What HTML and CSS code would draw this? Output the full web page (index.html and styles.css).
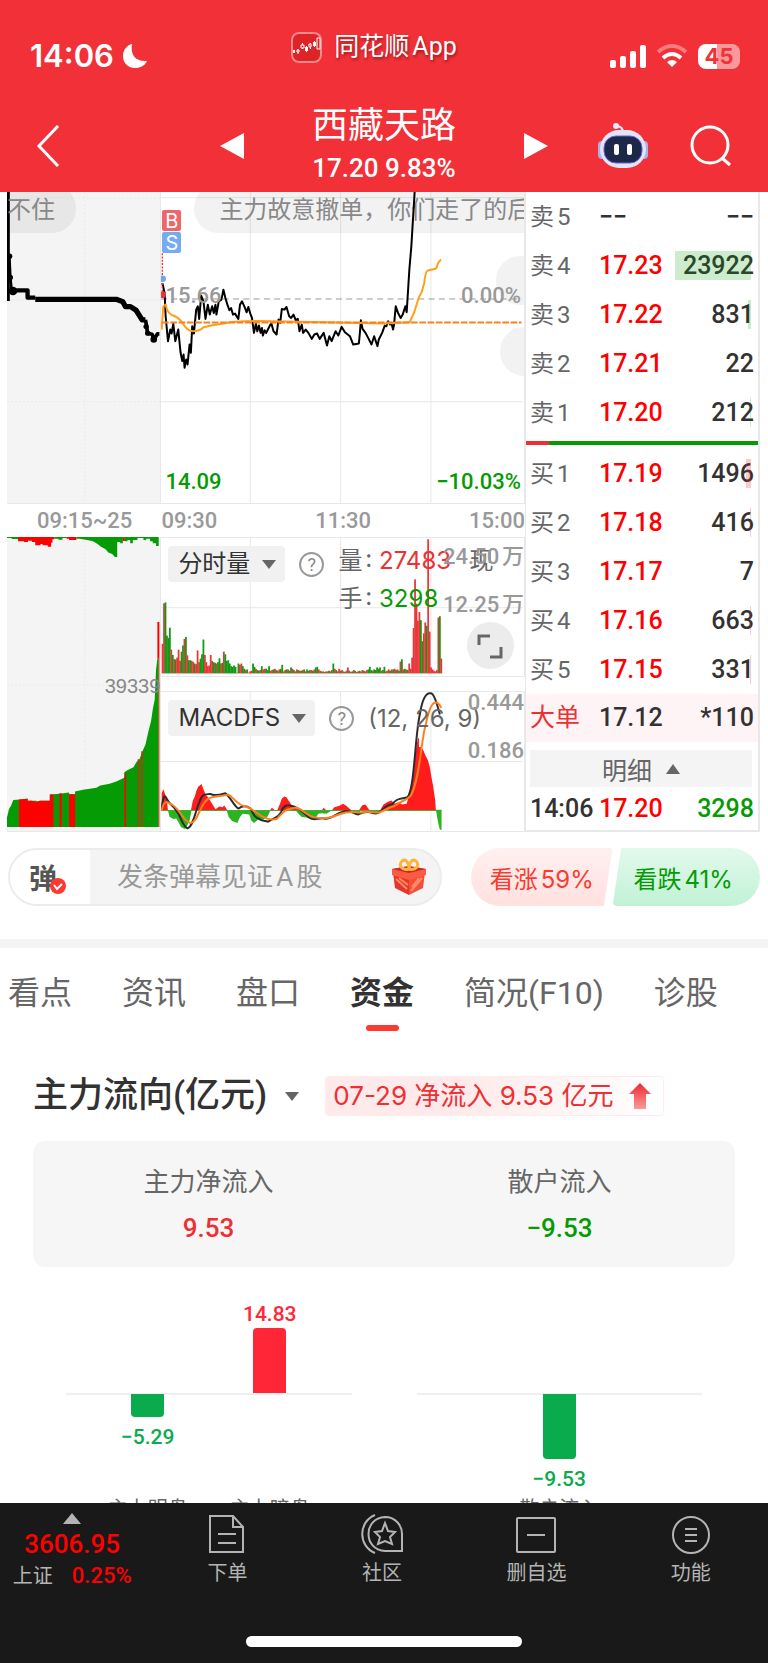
FILE: index.html
```html
<!DOCTYPE html>
<html lang="zh-CN">
<head>
    <meta charset="UTF-8">
    <meta name="viewport" content="width=device-width, initial-scale=1.0">
    <title>西藏天路</title>
    <link rel="stylesheet" href="styles.css">
</head>
<body>
    <div class="app">
        <header class="header">
            <div class="status-bar">
                <div class="clock">
                    <span>14:06</span>
                    <svg width="26" height="26" viewBox="0 0 26 26"><path d="M10 1C8 12 14 19 25 18C22 24 17 25 13 25C5 25 1 19 1 13C1 7 5 2 10 1Z" fill="#fff"/></svg>
                </div>
                <div class="app-name">
                    <svg width="31" height="31" viewBox="0 0 31 31">
                        <rect x="1" y="1" width="29" height="29" rx="7" fill="#df2427" stroke="#f8888b" stroke-width="2"/>
                        <path d="M7 17v5M11.500 11v6M15.500 14v6M19.500 11v6M23.500 9v6" stroke="#fff" stroke-width="1"/>
                        <path d="M2 18h2v3H2zM14 15h3v4h-3zM22 10h3v4h-3z" fill="#fff"/>
                        <path d="M6 18h2v2H6zM10 13h3v3h-3zM18 12h2v3h-2zM26 6h3v11h-3z" fill="#df2427" stroke="#fff"/>
                    </svg>
                    <span>同花顺App</span>
                </div>
                <div class="device">
                    <svg width="36" height="23" viewBox="0 0 36 23" fill="#fff">
                        <rect x="0" y="15" width="6" height="8" rx="2"/><rect x="10" y="11" width="6" height="12" rx="2"/><rect x="20" y="6" width="6" height="17" rx="2"/><rect x="30" y="0" width="6" height="23" rx="2"/>
                    </svg>
                    <svg width="32" height="24" viewBox="0 0 32 24" fill="none" stroke="#fff" stroke-width="4">
                        <path d="M2 8Q16 -4 30 8" stroke="#f77c80"/>
                        <path d="M7 14Q16 6 25 14"/>
                        <path d="M16 23l-5-5q5-4 10 0z" fill="#fff" stroke="none"/>
                    </svg>
                    <div class="battery">45</div>
                </div>
            </div>
            <div class="nav">
                <button class="icon-btn" aria-label="返回"><svg width="24" height="42" viewBox="0 0 24 42" fill="none" stroke="#fff" stroke-width="3"><path d="M22 1L3 21L22 41"/></svg></button>
                <div class="stock">
                    <button class="icon-btn" aria-label="上一只"><svg width="24" height="26" viewBox="0 0 24 26"><path d="M24 0v26L0 13z" fill="#fff"/></svg></button>
                    <div class="stock-title">
                        <h1>西藏天路</h1>
                        <p>17.20 9.83%</p>
                    </div>
                    <button class="icon-btn" aria-label="下一只"><svg width="24" height="26" viewBox="0 0 24 26"><path d="M0 0v26L24 13z" fill="#fff"/></svg></button>
                </div>
                <div class="nav-right">
                    <button class="icon-btn" aria-label="智能助手">
                        <svg width="50" height="46" viewBox="0 0 50 46">
                            <path d="M25 9Q25 4 19 3" fill="none" stroke="#e8eafc" stroke-width="2"/>
                            <circle cx="18" cy="3" r="3" fill="#e8eafc"/>
                            <rect x="0" y="18" width="8" height="18" rx="4" fill="#a9b2e8"/><rect x="42" y="18" width="8" height="18" rx="4" fill="#a9b2e8"/>
                            <rect x="2" y="7" width="46" height="38" rx="19" fill="#e3e4f8"/>
                            <rect x="6" y="13" width="38" height="27" rx="12" fill="#1d2748" stroke="#6b63e0"/>
                            <rect x="16" y="21" width="5" height="11" rx="2" fill="#fff"/><rect x="29" y="21" width="5" height="11" rx="2" fill="#fff"/>
                        </svg>
                    </button>
                    <button class="icon-btn" aria-label="搜索"><svg width="42" height="42" viewBox="0 0 42 42" fill="none" stroke="#fff" stroke-width="3"><circle cx="20" cy="20" r="18"/><path d="M32 33l8 7"/></svg></button>
                </div>
            </div>
        </header>

        <main class="content">
            <section class="market">
                <div class="charts">
                    <div class="panel auction-price">
                        <svg viewBox="21 6 462 936" preserveAspectRatio="none">
                            <g stroke="#e8e8e8" stroke-width="3" stroke-dasharray="5 7">
                                <path d="M21 24H483M21 637H483M255 6V942"/>
                            </g>
                            <path d="M21 331H483" stroke="#ececec" stroke-width="3"/>
                            <g fill="none" stroke="#000" stroke-linejoin="round">
                                <path d="M25 6V334" stroke-width="9"/>
                                <path d="M28 198L31 262L35 303" stroke-width="8"/>
                                <path d="M35 302H83V324H106" stroke-width="13"/>
                                <path d="M106 329H350L370 336L378 351H393L410 362L420 378L428 391H438" stroke-width="16"/>
                                <path d="M438 391L442 412L444 431L458 434L464 450L474 433H480" stroke-width="11"/>
                            </g>
                            <g fill="#000"><circle cx="29" cy="199" r="8"/><circle cx="31" cy="263" r="8"/><circle cx="39" cy="304" r="13"/><circle cx="440" cy="411" r="8"/><circle cx="463" cy="450" r="10"/><circle cx="445" cy="431" r="8"/></g>
                        </svg>
                        <span class="bullet bullet-left">不住</span>
                    </div>
                    <div class="panel price">
                        <svg viewBox="486 6 1092 936" preserveAspectRatio="none">
                            <path d="M486 23H1575M486 637H1575M755 6V942M1027 6V942M1299 6V942" stroke="#e8e8e8" stroke-width="3"/>
                        </svg>
                        <span class="bullet bullet-main">主力故意撤单，你们走了的后</span>
                        <span class="bullet bullet-small">⋮</span>
                        <span class="bullet bullet-dot"></span>
                        <svg class="lines" viewBox="486 6 1092 936" preserveAspectRatio="none" fill="none" stroke-linejoin="round">
                            <path d="M486 328H1572" stroke="#999" stroke-width="3" stroke-dasharray="18 13"/>
                            <path d="M490 280L497 310L500 380L507 455L514 420L518 432L523 402L529 455L538 420L545 490L550 515L554 495L557 535L562 510L566 525L572 465L576 490L580 410L585 432L592 360L597 350L601 388L607 318L614 335L620 388L627 345L633 375L640 350L645 370L650 345L653 375L660 335L668 330L674 300L680 325L686 345L692 362L697 355L703 375L709 372L719 388L724 345L730 335L737 350L744 368L749 352L755 372L760 385L766 430L772 402L776 425L781 408L786 430L790 415L793 438L798 422L803 430L808 420L818 400L825 425L834 435L840 390L845 400L850 358L858 360L864 352L872 380L878 385L885 375L892 392L898 388L903 425L910 405L914 430L922 420L930 430L940 448L948 435L956 432L964 448L976 430L986 468L993 440L1000 455L1012 425L1020 438L1030 412L1040 428L1055 440L1065 465L1082 462L1085 430L1088 392L1093 418L1102 430L1110 445L1120 465L1128 440L1138 470L1142 450L1152 430L1160 408L1165 410L1170 395L1176 405L1180 400L1185 420L1188 405L1193 350L1200 370L1208 385L1214 375L1222 350L1226 368L1234 240L1240 170L1250 6" stroke="#000" stroke-width="6"/>
                            <path d="M488 420L493 350L500 345Q505 370 518 376Q540 382 552 402Q568 430 590 424Q606 423 614 413Q645 405 675 402Q700 394 780 394L980 398L1160 402L1235 398L1248 370L1262 325L1272 305L1279 280Q1282 245 1290 242L1315 236Q1322 212 1330 210" stroke="#ff9f1a" stroke-width="6"/>
                            <path d="M489 399H1572" stroke="#ff7f1f" stroke-width="6" stroke-dasharray="20 5"/>
                            <path d="M490 190V315" stroke="#e8343a" stroke-width="4" stroke-dasharray="6 4"/>
                            <circle cx="491" cy="267" r="10" fill="#6da5ee"/>
                            <circle cx="491" cy="315" r="10" fill="#e8343a"/>
                        </svg>
                        <span class="mark mark-buy">B</span>
                        <span class="mark mark-sell">S</span>
                        <span class="label mid-price">15.66</span>
                        <span class="label mid-rate">0.00%</span>
                        <span class="label low-price">14.09</span>
                        <span class="label low-rate">−10.03%</span>
                    </div>
                    <div class="times times-auction">09:15~25</div>
                    <div class="times"><span>09:30</span><span>11:30</span><span>15:00</span></div>
                    <div class="panel auction-volume">
                        <svg viewBox="21 21 462 885" preserveAspectRatio="none">
                            <path d="M21 467H483M255 21V906" stroke="#e8e8e8" stroke-width="3" stroke-dasharray="5 7"/>
                            <path d="M21 21H54V27H35V24H21ZM163 21H200V24H188V29H176V26H163ZM230 21H478V48H470V40H460V34H452V26H440V30H432V24H414V30H400V40H392V30H384V34H376V24H370V40H362V36H353V81H346L338 72L326 68L318 58L304 50L294 42L280 34L262 30L240 26H230Z" fill="#049b04"/>
                            <path d="M54 21H163V28H158V38H154V50H144V46H128V42H122V46H106V36H96V32H84V36H72V34H54ZM200 21H230V30H208V26H200ZM370 24H376V33H370Z" fill="#f00"/>
                            <path d="M21 894V865L27 840L33 830L40 813L60 811L80 809H84V815H110V818L120 815H150V796L180 794L208 790V795H226V787L250 782L290 776L302 769L330 764L352 756L374 746V730L382 724L402 714L410 700L420 690L430 664L438 646L446 610L455 575L460 540L466 510L470 420L474 387H478V894Z" fill="#049b04"/>
                            <path d="M57 894V811L82 809V815H96L104 818H110L120 815H150V796H161V894ZM179 894V792H186V894ZM208 894V795H226V894ZM375 894V746L380 724V894ZM474 387V277H480V894H478V387Z" fill="#f00"/>
                            <path d="M417 894V690M428 894V666" stroke="#b43b10" stroke-width="5"/>
                        </svg>
                        <span class="label peak">39339</span>
                    </div>
                    <div class="indicators">
                        <div class="panel volume">
                            <svg viewBox="486 21 1092 420" preserveAspectRatio="none">
                                <path d="M486 233H1575M755 21V441M1027 21V441M1299 21V441" stroke="#e8e8e8" stroke-width="3"/>
                                <g id="volumeBars"></g>
                            </svg>
                            <div class="tools">
                                <button class="chip">分时量<i class="caret"></i></button>
                                <button class="help" aria-label="分时量说明">?</button>
                                <p class="reading"><span>量: <b class="up">27483</b></span><span>现</span><span>手: <b class="down">3298</b></span></p>
                            </div>
                            <div class="scale"><span>24.50万</span><span>12.25万</span></div>
                            <button class="expand" aria-label="全屏"><svg width="26" height="26" viewBox="0 0 26 26" fill="none" stroke="#666" stroke-width="3"><path d="M2 12V3H13M13 24H24V14"/></svg></button>
                        </div>
                        <div class="panel macd">
                            <svg viewBox="486 484 1092 420" preserveAspectRatio="none">
                                <path d="M486 694H1575M755 484V904M1027 484V904M1299 484V904" stroke="#e8e8e8" stroke-width="3"/>
                                <path d="M488 842V790L493 778L498 792L503 805L507 842ZM576 842L582 812L588 800L592 784L598 770L608 762L614 778L620 792L630 806L640 822L650 838L662 830L672 832L676 826L684 838V842ZM814 842L820 834L830 842H836L845 820L850 806L858 800L864 802L870 812L880 826L890 830L900 842H970L976 834L984 842H1000L1008 832L1024 828L1034 822L1044 828L1056 838L1060 842H1082L1092 826L1102 824L1112 838L1116 842H1146L1156 824L1168 816L1180 812L1190 822L1202 816L1212 824L1226 822L1232 800L1240 760L1248 720L1252 670L1260 624H1263V650H1270L1276 660L1282 674L1290 690L1296 712L1300 738L1306 770L1312 812L1314 842Z" fill="#ff1c1c"/>
                                <path d="M507 842L512 862L524 868L532 866L540 880L546 892L558 898L564 890L572 872L578 842ZM684 842L690 862L700 874L716 880L724 862L732 852L752 854L758 872L766 880L778 870L790 872L806 862L814 846V842ZM892 842L900 852L910 862L930 864L950 866L960 852L970 850L984 852L1000 842ZM1060 842L1070 850L1082 852L1088 842ZM1112 842L1124 850L1140 850L1146 842ZM1314 840L1318 864L1322 884L1326 900H1331V840Z" fill="#2cb321"/>
                                <path d="M486 842H1331" stroke="#4aa82f" stroke-width="3"/>
                                <g fill="none" stroke-width="6">
                                    <path d="M488 838C492 800 497 790 504 808C514 828 526 828 534 846C546 858 550 890 566 896C584 890 590 840 602 816C610 788 622 794 634 792C648 800 666 794 680 790C694 798 708 834 720 836C732 826 744 828 756 836C762 850 770 866 780 866C790 876 800 872 808 876C826 864 840 864 848 846C858 820 872 826 886 830C906 838 918 850 930 862C944 876 958 864 976 866C998 872 1012 850 1034 846C1052 836 1066 852 1080 854C1096 846 1108 844 1124 850C1150 858 1158 820 1182 824C1200 800 1214 808 1228 802C1250 780 1250 620 1266 550C1274 500 1286 488 1296 488C1306 484 1314 508 1326 552" stroke="#2c2c2c"/>
                                    <path d="M488 842C494 812 504 814 514 822C540 830 550 872 574 880C598 882 604 808 640 802C660 798 674 798 688 794C706 802 716 828 742 830C762 838 770 848 788 858C804 868 816 872 834 868C850 852 856 840 880 836C906 826 918 856 946 862C980 870 1004 862 1028 852C1052 842 1070 848 1090 848C1110 842 1128 850 1144 848C1160 842 1174 832 1194 826C1210 812 1226 812 1238 798C1266 750 1270 620 1284 580C1292 540 1302 518 1312 516C1320 514 1326 524 1330 532" stroke="#ff7f1f"/>
                                </g>
                            </svg>
                            <div class="tools">
                                <button class="chip">MACDFS<i class="caret"></i></button>
                                <button class="help" aria-label="MACDFS说明">?</button>
                                <p class="reading">(12, 26, 9)</p>
                            </div>
                            <div class="scale"><span>0.444</span><span>0.186</span></div>
                        </div>
                    </div>
                </div>

                <div class="book">
                    <table>
                        <tbody class="sell">
                            <tr><th>卖5</th><td class="flat">−−</td><td>−−</td></tr>
                            <tr><th>卖4</th><td>17.23</td><td><i class="depth" style="width:76px"></i>23922</td></tr>
                            <tr><th>卖3</th><td>17.22</td><td><i class="depth" style="width:3px"></i>831</td></tr>
                            <tr><th>卖2</th><td>17.21</td><td>22</td></tr>
                            <tr><th>卖1</th><td>17.20</td><td><i class="depth" style="width:1px"></i>212</td></tr>
                        </tbody>
                    </table>
                    <div class="ratio"></div>
                    <table>
                        <tbody class="buy">
                            <tr><th>买1</th><td>17.19</td><td><i class="depth" style="width:5px"></i>1496</td></tr>
                            <tr><th>买2</th><td>17.18</td><td><i class="depth" style="width:1px"></i>416</td></tr>
                            <tr><th>买3</th><td>17.17</td><td>7</td></tr>
                            <tr><th>买4</th><td>17.16</td><td><i class="depth" style="width:1px"></i>663</td></tr>
                            <tr><th>买5</th><td>17.15</td><td><i class="depth" style="width:1px"></i>331</td></tr>
                            <tr class="big-order"><th>大单</th><td>17.12</td><td>*110</td></tr>
                        </tbody>
                    </table>
                    <button class="detail">明细<i class="caret caret-up"></i></button>
                    <table class="trades">
                        <tbody>
                            <tr><td>14:06</td><td>17.20</td><td>3298</td></tr>
                        </tbody>
                    </table>
                </div>
            </section>

            <section class="interact">
                <div class="comment">
                    <button class="comment-toggle" aria-label="弹幕开关">弹<svg width="16" height="16" viewBox="0 0 16 16"><circle cx="8" cy="8" r="8" fill="#fb3a30"/><path d="M4 7l3 4l5-5" fill="none" stroke="#fff" stroke-width="2"/></svg></button>
                    <input type="text" aria-label="发弹幕" placeholder="发条弹幕见证A股">
                    <svg width="36" height="38" viewBox="0 0 36 38">
                        <path d="M2 14L18 19V37L4 30Z" fill="#e5352a"/><path d="M34 14L18 19V37L32 30Z" fill="#f0503a"/>
                        <path d="M1 11L18 8L35 11V17L18 22L1 17Z" fill="#fb5b43"/><path d="M1 11L18 15L35 11L18 8Z" fill="#c92a22"/>
                        <path d="M5 21L16 31M8 20L17 27M20 33L31 20M21 29L28 20" stroke="#ff8b62" stroke-width="2"/>
                        <path d="M18 11C11 13 7 7 11 3C15 0 18 5 18 11C18 5 21 0 25 3C29 7 25 13 18 11Z" fill="none" stroke="#ffb33e" stroke-width="3"/>
                    </svg>
                </div>
                <div class="vote">
                    <button class="vote-up">看涨59%</button>
                    <button class="vote-down">看跌41%</button>
                </div>
            </section>

            <nav class="tabs">
                <a href="#">看点</a>
                <a href="#">资讯</a>
                <a href="#">盘口</a>
                <a href="#" class="active">资金</a>
                <a href="#">简况(F10)</a>
                <a href="#">诊股</a>
            </nav>

            <section class="flow">
                <div class="flow-head">
                    <h2>主力流向(亿元)</h2>
                    <i class="caret"></i>
                    <p class="flow-tag">07-29 净流入 9.53 亿元
                        <svg width="22" height="26" viewBox="0 0 22 26"><defs><linearGradient id="arrow" x2="0" y2="1"><stop stop-color="#ee2a2f"/><stop offset="1" stop-color="#fa9a9c"/></linearGradient></defs><path d="M11 0L22 11H17V26H5V11H0Z" fill="url(#arrow)"/></svg>
                    </p>
                </div>
                <dl class="summary">
                    <div><dt>主力净流入</dt><dd class="up">9.53</dd></div>
                    <div><dt>散户流入</dt><dd class="down">−9.53</dd></div>
                </dl>
                <div class="bar-groups">
                    <div class="bar-group">
                        <div class="bar-item"><div class="above"></div><div class="below"><i style="height:23px"></i><span>−5.29</span></div><p>主力明盘</p></div>
                        <div class="bar-item"><div class="above"><span>14.83</span><i style="height:65px"></i></div><div class="below"></div><p>主力暗盘</p></div>
                    </div>
                    <div class="bar-group">
                        <div class="bar-item"><div class="above"></div><div class="below"><i style="height:65px"></i><span>−9.53</span></div><p>散户流入</p></div>
                    </div>
                </div>
            </section>
        </main>

        <footer class="toolbar">
            <div class="toolbar-row">
                <a href="#" class="index">
                    <i class="caret caret-up"></i>
                    <strong>3606.95</strong>
                    <span>上证 <b>0.25%</b></span>
                </a>
                <a href="#" class="tool">
                    <svg width="42" height="40" viewBox="0 0 42 40"><path d="M3 2H26L36 13V38H3ZM26 2V13H36M11 20H29M11 29H29"/></svg>
                    下单
                </a>
                <a href="#" class="tool">
                    <svg width="42" height="40" viewBox="0 0 42 40"><path d="M14 1C-3 8 -3 32 14 39M41 37H24C2 36 2 4 24 3C35 3 41 12 41 20ZM24 9L27 17L34 18L29 23L31 30L24 27L17 30L19 23L14 18L21 17Z"/></svg>
                    社区
                </a>
                <a href="#" class="tool">
                    <svg width="42" height="40" viewBox="0 0 42 40"><rect x="2" y="4" width="38" height="34" rx="1"/><path d="M12 21H30"/></svg>
                    删自选
                </a>
                <a href="#" class="tool">
                    <svg width="42" height="40" viewBox="0 0 42 40"><circle cx="21" cy="21" r="18"/><path d="M15 15H27M15 21H27M15 27H27"/></svg>
                    功能
                </a>
            </div>
            <div class="home-bar"></div>
        </footer>
    </div>

    <script src="chart.js"></script>
</body>
</html>
```

FILE: styles.css
```css
body {
    margin: 0;
    font-family: Roboto, "Noto Sans CJK SC", sans-serif;
    color: #323232;
    background-color: #fff;
    text-autospace: normal;
}

h1, h2, p, dl, dd {
    margin: 0;
}

button, input {
    margin: 0;
    padding: 0;
    border: none;
    background: none;
    font-family: inherit;
    color: inherit;
}

button {
    cursor: pointer;
}

a {
    color: inherit;
    text-decoration: none;
}

svg {
    display: block;
    flex-shrink: 0;
}

.app {
    display: flex;
    flex-direction: column;
    height: 100vh;
}

.up {
    color: #ee2f33;
}

.down {
    color: #049b04;
}

.caret {
    width: 0;
    height: 0;
    border: 7px solid transparent;
    border-top: 9px solid #666;
    border-bottom: none;
}

.caret-up {
    border-top: none;
    border-bottom: 10px solid #666;
}

/* header */
.header {
    background-color: #f23037;
    color: #fff;
    height: 192px;
}

.status-bar {
    display: grid;
    grid-template-columns: 1fr auto 1fr;
    align-items: center;
    height: 96px;
    padding: 8px 28px 0 30px;
    box-sizing: border-box;
}

.clock {
    display: flex;
    align-items: center;
    gap: 8px;
    font: 600 31px/40px Inter, sans-serif;
    padding-top: 8px;
}

.app-name {
    display: flex;
    align-items: center;
    gap: 12px;
    padding: 0 22px 10px 0;
    font-size: 25px;
    line-height: 32px;
    text-shadow: 1px 2px 3px rgba(0, 0, 0, 0.4);
}

.device {
    display: flex;
    align-items: center;
    justify-content: flex-end;
    gap: 10px;
    padding-top: 8px;
}

.battery {
    width: 42px;
    height: 25px;
    border-radius: 8px;
    background: linear-gradient(90deg, #fff 45%, #f9989b 45%);
    color: #f23037;
    font: 700 22px/25px Inter, sans-serif;
    text-align: center;
}

.nav {
    display: grid;
    grid-template-columns: 1fr auto 1fr;
    align-items: center;
    height: 96px;
    padding: 4px 36px 0;
    box-sizing: border-box;
}

.icon-btn {
    justify-self: start;
}

.stock {
    display: flex;
    align-items: center;
    gap: 66px;
}

.stock-title {
    text-align: center;
    width: 148px;
}

.stock-title h1 {
    font-size: 36px;
    font-weight: 400;
    line-height: 44px;
}

.stock-title p {
    font-size: 26px;
    font-weight: 500;
    line-height: 40px;
    white-space: nowrap;
}

.nav-right {
    display: flex;
    align-items: center;
    justify-content: flex-end;
    gap: 42px;
}

/* scroll area */
.content {
    flex: 1;
    min-height: 0;
    overflow-x: hidden;
    overflow-y: auto;
    scrollbar-width: none;
}

.market {
    display: flex;
    padding: 0 8px 0 7px;
}

.charts {
    flex: 520;
    min-width: 0;
    display: grid;
    grid-template-columns: 155fr 365fr;
    grid-template-rows: 312px 33px 295px;
}

.panel {
    position: relative;
    overflow: hidden;
    box-sizing: border-box;
    border: solid #e8e8e8;
    border-width: 0 1px 1px 0;
}

.panel > svg {
    width: 100%;
    height: 100%;
}

.panel .lines {
    position: absolute;
    top: 0;
    left: 0;
}

.auction-price, .auction-volume {
    background-color: #f4f4f4;
}

.bullet {
    position: absolute;
    box-sizing: border-box;
    height: 49px;
    border-radius: 24px;
    background-color: rgba(0, 0, 0, 0.05);
    color: #888;
    font-size: 24px;
    line-height: 36px;
    white-space: nowrap;
}

.bullet-left {
    top: -8px;
    left: -20px;
    width: 89px;
    padding: 8px 0 0 20px;
}

.bullet-main {
    top: -8px;
    left: 33px;
    padding: 8px 20px 0 25px;
}

.bullet-small {
    top: 64px;
    right: -28px;
    width: 56px;
    padding: 6px 0 0 22px;
}

.bullet-dot {
    top: 135px;
    right: -24px;
    width: 48px;
}

.mark {
    position: absolute;
    left: 1px;
    width: 19px;
    height: 21px;
    border-radius: 2px;
    color: #fff;
    font: 20px/22px Inter, sans-serif;
    text-align: center;
}

.mark-buy {
    top: 18px;
    background-color: #ee6669;
}

.mark-sell {
    top: 40px;
    background-color: #74abf2;
}

.label {
    position: absolute;
    font-size: 22px;
    font-weight: 500;
    line-height: 28px;
    color: #999;
}

.mid-price {
    top: 90px;
    left: 4px;
}

.mid-rate {
    top: 90px;
    right: 3px;
}

.low-price, .low-rate {
    bottom: 7px;
    color: #049b04;
}

.low-price {
    left: 4px;
}

.low-rate {
    right: 3px;
}

.times {
    display: flex;
    align-items: center;
    justify-content: space-between;
    font-size: 22px;
    font-weight: 500;
    color: #999;
}

.times-auction {
    justify-content: flex-end;
    padding-right: 29px;
}

.peak {
    right: 0;
    top: 135px;
    font: 20px/28px "Liberation Sans", sans-serif;
    color: #888;
}

.indicators {
    display: grid;
    grid-template-rows: 140px 141px;
    gap: 14px;
}

.indicators .panel {
    border-top-width: 1px;
}

.tools {
    position: absolute;
    top: 8px;
    left: 7px;
    display: flex;
    align-items: flex-start;
}

.chip {
    display: flex;
    align-items: center;
    gap: 12px;
    height: 36px;
    padding: 0 9px 0 10px;
    border-radius: 4px;
    background-color: #f1f1f1;
    font: 24px/36px Inter, "Noto Sans CJK SC", sans-serif;
    color: #323232;
}

.help {
    width: 25px;
    height: 25px;
    margin: 6px 14px 0;
    box-sizing: border-box;
    border: 2px solid #999;
    border-radius: 50%;
    color: #888;
    font-size: 18px;
    line-height: 20px;
}

.reading {
    display: grid;
    grid-template-columns: 131px auto;
    font: 24px/38px Inter, "Noto Sans CJK SC", sans-serif;
    color: #666;
    white-space: nowrap;
}

.volume .reading {
    margin-top: -4px;
}

.reading b {
    font-weight: 400;
}

.scale {
    position: absolute;
    top: 1px;
    right: 0;
    display: grid;
    gap: 12px;
    text-align: right;
    font-size: 22px;
    font-weight: 500;
    line-height: 36px;
    color: #999;
}

.macd .scale {
    top: -7px;
}

.expand {
    position: absolute;
    right: 10px;
    bottom: 7px;
    width: 47px;
    height: 47px;
    border-radius: 50%;
    background-color: #ececec;
}

.expand svg {
    margin: 0 auto;
}

/* order book */
.book {
    flex: 233;
    min-width: 0;
    box-sizing: border-box;
    border: solid #e8e8e8;
    border-width: 0 2px 2px 1px;
}

.book table {
    width: 100%;
    border-collapse: collapse;
    table-layout: fixed;
}

.book tr {
    height: 49px;
}

.book th, .book td {
    padding: 0 4px;
    font-size: 25px;
    line-height: 36px;
}

.book th {
    width: 61px;
    font-size: 24px;
    font-weight: 400;
    text-align: left;
    color: #666;
    white-space: nowrap;
}

.book td {
    width: 66px;
    font-weight: 500;
    color: #f00;
    white-space: nowrap;
}

.book td:last-child {
    position: relative;
    width: auto;
    text-align: right;
    color: #323232;
}

.book td.flat {
    color: #323232;
}

.depth {
    position: absolute;
    top: 10px;
    right: 7px;
    height: 29px;
}

.sell .depth {
    background-color: rgba(4, 155, 4, 0.2);
}

.buy .depth {
    background-color: rgba(238, 47, 51, 0.25);
}

.ratio {
    height: 4px;
    margin: 4px 0;
    background: linear-gradient(90deg, #ee2f33 10%, #049b04 10%);
}

.book .big-order {
    height: 48px;
    background-color: #fff4f5;
}

.book .big-order th {
    color: #ee2f33;
    font-size: 25px;
}

.book .big-order td {
    color: #323232;
}

.detail {
    display: flex;
    align-items: center;
    justify-content: center;
    gap: 14px;
    width: calc(100% - 10px);
    height: 37px;
    margin: 8px 5px 0 4px;
    background-color: #f4f4f4;
    font-size: 25px;
    color: #666;
}

.book .trades tr {
    height: 43px;
}

.book .trades td:first-child {
    width: 61px;
    color: #323232;
}

.book .trades td:last-child {
    color: #049b04;
}

/* comment and vote row */
.interact {
    display: flex;
    justify-content: space-between;
    padding: 16px 8px 33px;
    border-bottom: 9px solid #f4f4f4;
}

.comment {
    display: flex;
    align-items: center;
    flex: 0 1 434px;
    height: 58px;
    box-sizing: border-box;
    padding-right: 13px;
    border: 2px solid #ececec;
    border-radius: 29px;
    background-color: #f4f4f4;
    overflow: hidden;
}

.comment-toggle {
    display: flex;
    align-items: center;
    width: 80px;
    height: 100%;
    padding-left: 19px;
    background-color: #fff;
    font-size: 28px;
    font-weight: 700;
    color: #555;
}

.comment-toggle svg {
    margin: 18px 0 0 -7px;
}

.comment input {
    flex: 1;
    min-width: 0;
    padding-left: 27px;
    font-size: 26px;
    outline: none;
}

.comment input::placeholder {
    color: #999;
}

.vote {
    display: flex;
    flex: 0 1 289px;
    height: 58px;
}

.vote button {
    flex: 1;
    font: 24px Inter, "Noto Sans CJK SC", sans-serif;
    text-autospace: normal;
    white-space: nowrap;
}

.vote .vote-up {
    border-radius: 29px 4px 4px 29px;
    background: linear-gradient(#fff0ef, #ffe1df);
    color: #fb3a30;
    clip-path: polygon(0 0, 100% 0, 94% 100%, 0 100%);
}

.vote .vote-down {
    padding-right: 6px;
    border-radius: 4px 29px 29px 4px;
    background: linear-gradient(#e2f9ec, #c1f2d6);
    color: #049b04;
    clip-path: polygon(6% 0, 100% 0, 100% 100%, 0 100%);
}

/* tabs */
.tabs {
    display: flex;
    gap: 50px;
    padding: 19px 8px 0;
    height: 66px;
    font-size: 32px;
    line-height: 52px;
    white-space: nowrap;
    color: #666;
}

.tabs .active {
    display: flex;
    flex-direction: column;
    align-items: center;
    font-weight: 700;
    color: #323232;
}

.tabs .active::after {
    content: "";
    width: 33px;
    height: 6px;
    margin-top: 6px;
    border-radius: 3px;
    background-color: #fb3a30;
}

/* capital flow */
.flow {
    padding: 43px 33px 0;
}

.flow-head {
    display: flex;
    align-items: center;
}

.flow-head h2 {
    font-size: 35px;
    font-weight: 500;
    line-height: 40px;
    white-space: nowrap;
}

.flow-head .caret {
    margin: 0 26px 0 18px;
}

.flow-tag {
    display: flex;
    align-items: center;
    gap: 16px;
    height: 38px;
    padding: 0 12px 0 7px;
    border: 1px solid #feecec;
    border-radius: 4px;
    background: linear-gradient(90deg, #feeaea 40%, #fff);
    font: 26px/38px Inter, "Noto Sans CJK SC", sans-serif;
    color: #ee2f33;
    white-space: nowrap;
}

.summary {
    display: grid;
    grid-template-columns: 1fr 1fr;
    margin-top: 25px;
    padding: 22px 0 20px;
    border-radius: 12px;
    background-color: #f6f6f6;
    text-align: center;
}

.summary dt {
    font-size: 26px;
    line-height: 38px;
    color: #666;
}

.summary dd {
    margin-top: 8px;
    font-size: 26px;
    font-weight: 500;
    line-height: 38px;
}

.bar-groups {
    display: grid;
    grid-template-columns: 1fr 1fr;
    gap: 65px;
    padding: 29px 33px 0;
}

.bar-group {
    display: flex;
    justify-content: center;
    background: linear-gradient(#efefef, #efefef) 0 97px / 100% 2px no-repeat;
}

.bar-item {
    width: 122px;
    text-align: center;
    font-size: 21px;
    font-weight: 500;
    line-height: 28px;
}

.bar-item i {
    width: 33px;
}

.above, .below {
    display: flex;
    flex-direction: column;
    align-items: center;
    box-sizing: border-box;
}

.above {
    height: 97px;
    justify-content: flex-end;
    color: #ff2638;
}

.above i {
    border-radius: 4px 4px 0 0;
    background-color: #ff2638;
}

.below {
    height: 102px;
    padding-top: 1px;
    color: #09ab4c;
}

.below i {
    border-radius: 0 0 4px 4px;
    background-color: #09ab4c;
}

.below span {
    padding-top: 6px;
}

.bar-item p {
    font-size: 20px;
    font-weight: 400;
    color: #666;
    white-space: nowrap;
}

/* bottom toolbar */
.toolbar {
    flex-shrink: 0;
    height: 160px;
    background-color: #191919;
    color: #b4b4b4;
}

.toolbar-row {
    display: grid;
    grid-template-columns: 150fr repeat(4, 154fr);
    height: 133px;
}

.index {
    display: flex;
    flex-direction: column;
    align-items: center;
    padding: 10px 6px 0 0;
    color: #f00;
}

.index .caret {
    border-width: 0 9px 11px;
    border-bottom-color: #b4b4b4;
}

.index strong {
    font-size: 26px;
    font-weight: 500;
    line-height: 40px;
}

.index span {
    font-size: 20px;
    line-height: 24px;
    color: #b4b4b4;
}

.index b {
    margin-left: 14px;
    font-size: 22px;
    font-weight: 500;
    color: #f00;
}

.tool {
    display: flex;
    flex-direction: column;
    align-items: center;
    gap: 4px;
    padding-top: 11px;
    font-size: 20px;
    line-height: 30px;
}

.tool svg {
    fill: none;
    stroke: #b4b4b4;
    stroke-width: 2;
}

.home-bar {
    width: 36%;
    height: 11px;
    margin: 0 auto;
    border-radius: 6px;
    background-color: #fff;
}
```

FILE: chart.js
```js
// minute volumes, negative = falling minute
const volumes = [
    90, 213, -216, -115, -108, -139, 72, -56, 44, -42, 48, 72, 38, -66, -85, 105, -111, 55, -40, -40,
    38, 35, -30, 28, 70, 34, -45, -58, -103, 56, 34, 22, 24, 56, 38, -34, -32, 30, -34, -46,
    30, -32, 66, -58, -38, -40, -30, -22, -20, -24, -20, 2, -30, 26, 30, -22, -14, 10, -12, 2,
    6, 8, -30, -20, 14, -10, -8, 10, -22, 12, 14, -14, -10, -22, 8, 10, -12, 14, -10, 8,
    12, -14, -26, 6, 10, -12, 12, -8, -18, 14, -10, 6, 12, -10, 8, -8, 10, -12, 6, -12,
    8, -10, 10, -8, 12, -18, -20, 12, 8, -6, 6, -4, 6, 6, -8, -6, 10, -30, 14, -10,
    6, 14, -8, 10, 6, -4, 8, 18, -8, 4, -6, 10, -8, 4, 6, -8, 6, 10, -8, 6,
    10, -12, -20, -10, 8, -12, -10, -18, -14, -18, 8, -10, -20, 6, 8, 12, -8, 12, -12, 14,
    -10, 12, -8, 36, -43, 12, -14, 12, -10, 30, 14, 48, 138, 286, 212, 160, 187, -162, -98,
    122, 155, -145, 408, 127, 18, 12, 8, 6, 10, 170, -174, 45
];

const upColor = "#e8373a";
const downColor = "#149914";
const left = 488;
const baseline = 433;
const step = 844 / volumes.length;

const group = document.getElementById("volumeBars");

volumes.forEach((value, index) => {
    const bar = document.createElementNS("http://www.w3.org/2000/svg", "rect");
    const height = Math.abs(value);
    bar.setAttribute("x", left + index * step);
    bar.setAttribute("y", baseline - height);
    bar.setAttribute("width", step + 1);
    bar.setAttribute("height", height);
    bar.setAttribute("fill", value > 0 ? upColor : downColor);
    group.appendChild(bar);
});
```
